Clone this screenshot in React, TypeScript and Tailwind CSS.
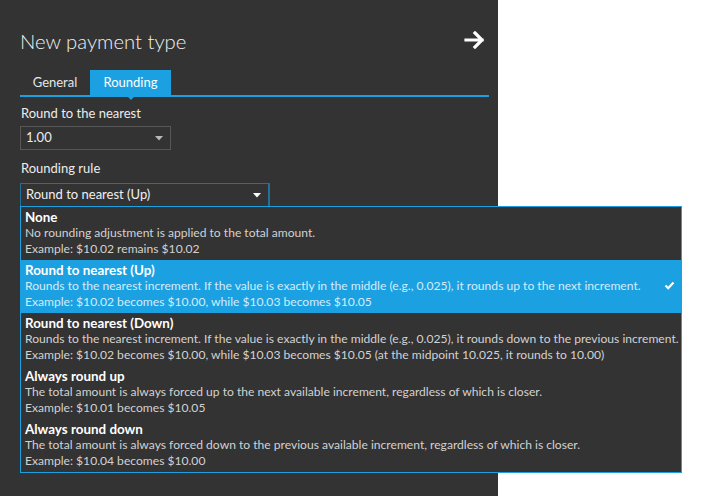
import React from "react";

const items = [
  {
    title: "None",
    desc: "No rounding adjustment is applied to the total amount.",
    ex: "Example: $10.02 remains $10.02",
  },
  {
    title: "Round to nearest (Up)",
    desc: "Rounds to the nearest increment. If the value is exactly in the middle (e.g., 0.025), it rounds up to the next increment.",
    ex: "Example: $10.02 becomes $10.00, while $10.03 becomes $10.05",
    selected: true,
  },
  {
    title: "Round to nearest (Down)",
    desc: "Rounds to the nearest increment. If the value is exactly in the middle (e.g., 0.025), it rounds down to the previous increment.",
    ex: "Example: $10.02 becomes $10.00, while $10.03 becomes $10.05 (at the midpoint 10.025, it rounds to 10.00)",
  },
  {
    title: "Always round up",
    desc: "The total amount is always forced up to the next available increment, regardless of which is closer.",
    ex: "Example: $10.01 becomes $10.05",
  },
  {
    title: "Always round down",
    desc: "The total amount is always forced down to the previous available increment, regardless of which is closer.",
    ex: "Example: $10.04 becomes $10.00",
  },
];

function Caret({ color }: { color: string }) {
  return (
    <svg width="8" height="5" viewBox="0 0 8 5">
      <path d="M0 0 H8 L4 4.5 Z" fill={color} />
    </svg>
  );
}

export default function App() {
  return (
    <div className="w-[703px] h-[496px] bg-white relative font-['Lato',sans-serif]">
      <div className="w-[498px] h-full bg-[#333333] pl-5 pr-[9px] pt-[28px]">
        <div className="flex items-center justify-between h-[28px]">
          <div className="text-[20.3px] font-light text-[#f0f0f0] leading-[28px] -mt-[3px]">
            New payment type
          </div>
          <svg width="22" height="18" viewBox="0 0 22 18" className="mr-[3px] -mt-[5px]">
            <path d="M2 9 H18 M11 2 L18 9 L11 16" stroke="white" strokeWidth="3.2" fill="none" strokeLinecap="square" />
          </svg>
        </div>
        <div className="mt-[14px] flex h-[27px] border-b-2 border-[#1ba1e2]">
          <div className="w-[70px] h-[25px] flex items-center justify-center text-[13px] text-[#e6e6e6]">
            General
          </div>
          <div className="relative w-[81px] h-[25px] flex items-center justify-center bg-[#1ba1e2] text-[13px] text-white">
            Rounding
            <div className="absolute left-1/2 -translate-x-1/2 top-[25px] w-0 h-0 border-l-[5px] border-r-[5px] border-t-[5px] border-l-transparent border-r-transparent border-t-[#1ba1e2]" />
          </div>
        </div>
        <div className="mt-[7px] text-[13px] leading-[18px] text-[#ececec] pl-px">Round to the nearest</div>
        <div className="mt-[4px] w-[151px] h-[24px] border border-[#575757] flex items-center justify-between pl-[5px] pr-[7px] text-[13px] text-[#ececec]">
          <span>1.00</span>
          <Caret color="#b8b8b8" />
        </div>
        <div className="mt-[9px] text-[13px] leading-[18px] text-[#ececec] pl-px">Rounding rule</div>
        <div className="relative mt-[6px] w-[250px]">
          <div className="h-[24px] border border-[#23709e] border-r-2 flex items-center justify-between pl-[5px] pr-[7px] text-[13px] text-[#f0f0f0]">
            <span>Round to nearest (Up)</span>
            <Caret color="#ffffff" />
          </div>
          <div className="absolute left-0 top-[23px] w-[662px] border border-[#1ba1e2] bg-[#333333] z-10">
            {items.map((it) => (
              <div
                key={it.title}
                className={
                  "relative h-[53px] pt-[2px] pl-[4px] text-[12.1px] leading-[16px] " +
                  (it.selected ? "bg-[#1ba1e2]" : "")
                }
              >
                <div className="font-bold text-white text-[13.4px]">{it.title}</div>
                <div className={it.selected ? "text-[#d3ecfa]" : "text-[#d2d2d2]"}>{it.desc}</div>
                <div className={it.selected ? "text-[#d3ecfa]" : "text-[#d2d2d2]"}>{it.ex}</div>
                {it.selected && (
                  <svg
                    width="11"
                    height="9"
                    viewBox="0 0 11 9"
                    className="absolute right-[6px] top-[21px]"
                  >
                    <path d="M1.5 4.5 L4.2 7.2 L9.5 1.5" stroke="white" strokeWidth="2.2" fill="none" />
                  </svg>
                )}
              </div>
            ))}
          </div>
        </div>
      </div>
    </div>
  );
}
